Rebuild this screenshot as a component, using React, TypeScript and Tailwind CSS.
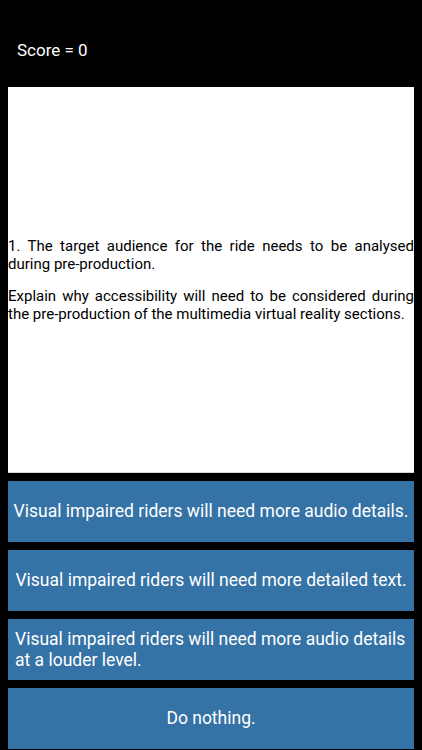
const answers = [
  { text: 'Visual impaired riders will need more audio details.', align: 'text-center' },
  { text: 'Visual impaired riders will need more detailed text.', align: 'text-center' },
  { text: 'Visual impaired riders will need more audio details at a louder level.', align: 'text-left' },
  { text: 'Do nothing.', align: 'text-center' },
];

export default function App() {
  return (
    <div
      className="w-[422px] h-[750px] overflow-hidden bg-black flex flex-col"
      style={{ fontFamily: 'Roboto, "Liberation Sans", Arial, sans-serif' }}
    >
      <div className="h-[87px] flex items-center pl-[17px] pt-[14px]">
        <span className="text-white text-[17px]">Score = 0</span>
      </div>

      <div className="mx-2 h-[386px] bg-white flex flex-col justify-center border-b border-gray-300">
        <div className="text-black text-[15px] leading-[18px] text-justify">
          <p>1. The target audience for the ride needs to be analysed during pre-production.</p>
          <p className="mt-[14px]">
            Explain why accessibility will need to be considered during the pre-production of the multimedia virtual reality sections.
          </p>
        </div>
      </div>

      <div className="flex flex-col gap-[8px] mt-2 mx-2">
        {answers.map((a) => (
          <button
            key={a.text}
            className={`h-[61px] shrink-0 bg-[#3572a5] text-white text-[17.5px] leading-[21px] px-[4px] flex items-center justify-center ${a.align}`}
          >
            <span className={`w-full ${a.align === 'text-left' ? 'pl-[3px]' : ''}`}>{a.text}</span>
          </button>
        ))}
      </div>
    </div>
  );
}
